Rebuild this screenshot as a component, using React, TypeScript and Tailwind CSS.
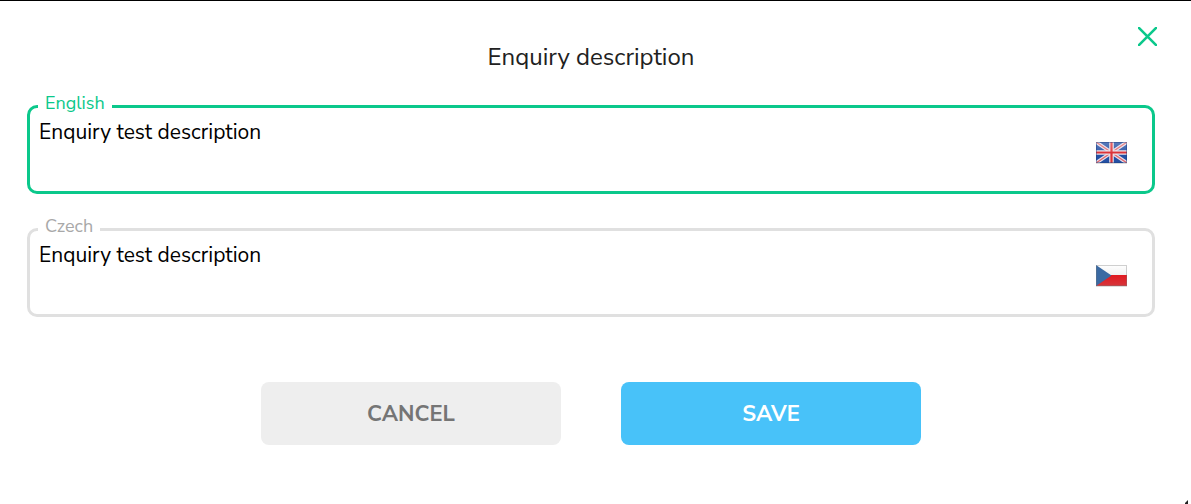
import { useState } from "react";
import type { ReactNode } from "react";

function FlagUK() {
  return (
    <svg viewBox="0 0 31 22" className="w-[31px] h-[22px]" aria-hidden="true">
      <defs>
        <linearGradient id="uk-shine" x1="0" y1="0" x2="0" y2="1">
          <stop offset="0" stopColor="#fff" stopOpacity="0.25" />
          <stop offset="0.5" stopColor="#fff" stopOpacity="0.08" />
          <stop offset="0.5" stopColor="#fff" stopOpacity="0" />
        </linearGradient>
        <clipPath id="uk-clip">
          <rect width="31" height="21" />
        </clipPath>
      </defs>
      <rect y="21" width="31" height="1" fill="#ddd" />
      <g clipPath="url(#uk-clip)">
        <rect width="31" height="21" fill="#2450a4" />
        <path d="M0 0L31 21M31 0L0 21" stroke="#e6dfec" strokeWidth="3.6" />
        <path d="M0 0L31 21M31 0L0 21" stroke="#e0686c" strokeWidth="1.3" />
        <path d="M15.5 0V21M0 10.5H31" stroke="#ecdfe6" strokeWidth="4.6" />
        <path d="M15.5 0V21M0 10.5H31" stroke="#dc3338" strokeWidth="2.2" />
        <rect width="31" height="21" fill="url(#uk-shine)" />
        <rect x="0.5" y="0.5" width="30" height="20" fill="none" stroke="#1d3e80" strokeOpacity="0.45" />
      </g>
    </svg>
  );
}

function FlagCZ() {
  return (
    <svg viewBox="0 0 31 22" className="w-[31px] h-[22px]" aria-hidden="true">
      <defs>
        <linearGradient id="cz-white" x1="0" y1="0" x2="0" y2="1">
          <stop offset="0" stopColor="#fff" />
          <stop offset="1" stopColor="#efefef" />
        </linearGradient>
        <linearGradient id="cz-red" x1="0" y1="0" x2="0" y2="1">
          <stop offset="0" stopColor="#e0181f" />
          <stop offset="1" stopColor="#d6363b" />
        </linearGradient>
      </defs>
      <rect y="21" width="31" height="1" fill="#ddd" />
      <rect width="31" height="11" fill="url(#cz-white)" />
      <rect y="10" width="31" height="11" fill="url(#cz-red)" />
      <path d="M0 0L15.5 10.5L0 21Z" fill="#3a6aa3" />
      <rect x="0.5" y="0.5" width="30" height="20" fill="none" stroke="#777" strokeOpacity="0.35" />
    </svg>
  );
}

interface FieldProps {
  id: string;
  label: string;
  active: boolean;
  value: string;
  onChange: (value: string) => void;
  onFocus: () => void;
  flag: ReactNode;
}

function DescriptionField({ id, label, active, value, onChange, onFocus, flag }: FieldProps) {
  return (
    <fieldset
      className={`min-w-0 border-[3px] rounded-[10px] px-2 pb-1.5 ${active ? "border-[#0bc88b]" : "border-[#e0e0e0]"}`}
    >
      <legend className={`px-[7px] pb-[7px] text-lg leading-5 ${active ? "text-[#0bc88b]" : "text-[#a8a8a8]"}`}>
        <label htmlFor={id}>{label}</label>
      </legend>
      <div className="flex items-center pr-[17px]">
        <textarea
          id={id}
          value={value}
          onChange={(e) => onChange(e.target.value)}
          onFocus={onFocus}
          className="block flex-1 min-w-0 h-[65px] px-px text-[21px] leading-6 text-black bg-transparent resize-none outline-none"
        />
        {flag}
      </div>
    </fieldset>
  );
}

export default function App() {
  const [active, setActive] = useState("english");
  const [english, setEnglish] = useState("Enquiry test description");
  const [czech, setCzech] = useState("Enquiry test description");

  return (
    <div className="relative min-h-screen overflow-hidden bg-white border-t border-black pl-[27px] pr-9 pt-10 pb-14 font-['Nunito_Sans','Nunito','Lato',sans-serif]">
      <button type="button" aria-label="Close" className="absolute top-[26px] right-[34px] cursor-pointer">
        <svg viewBox="0 0 19 19" className="size-[19px]" fill="none" stroke="#0bc88b" strokeWidth="2.6">
          <path d="M0 0L19 19M19 0L0 19" />
        </svg>
      </button>

      <h1 className="text-2xl leading-8 text-center text-[#212121]">Enquiry description</h1>

      <form onSubmit={(e) => e.preventDefault()}>
        <div className="flex flex-col gap-[22px] mt-5">
          <DescriptionField
            id="english"
            label="English"
            active={active === "english"}
            value={english}
            onChange={setEnglish}
            onFocus={() => setActive("english")}
            flag={<FlagUK />}
          />
          <DescriptionField
            id="czech"
            label="Czech"
            active={active === "czech"}
            value={czech}
            onChange={setCzech}
            onFocus={() => setActive("czech")}
            flag={<FlagCZ />}
          />
        </div>

        <div className="flex justify-center gap-[60px] mt-[65px]">
          <button
            type="button"
            className="w-[300px] h-[63px] pt-px rounded-lg bg-[#eeeeee] text-[22px] font-bold text-[#757575] cursor-pointer"
          >
            CANCEL
          </button>
          <button
            type="submit"
            className="w-[300px] h-[63px] pt-px rounded-lg bg-[#48c2f9] text-[22px] font-bold text-white cursor-pointer"
          >
            SAVE
          </button>
        </div>
      </form>

      {/* resize corner */}
      <svg viewBox="0 0 3 4" className="absolute right-[3px] bottom-0 w-[3px] h-1" aria-hidden="true">
        <path d="M3 0V4H0V3Z" fill="#222" />
      </svg>
    </div>
  );
}
